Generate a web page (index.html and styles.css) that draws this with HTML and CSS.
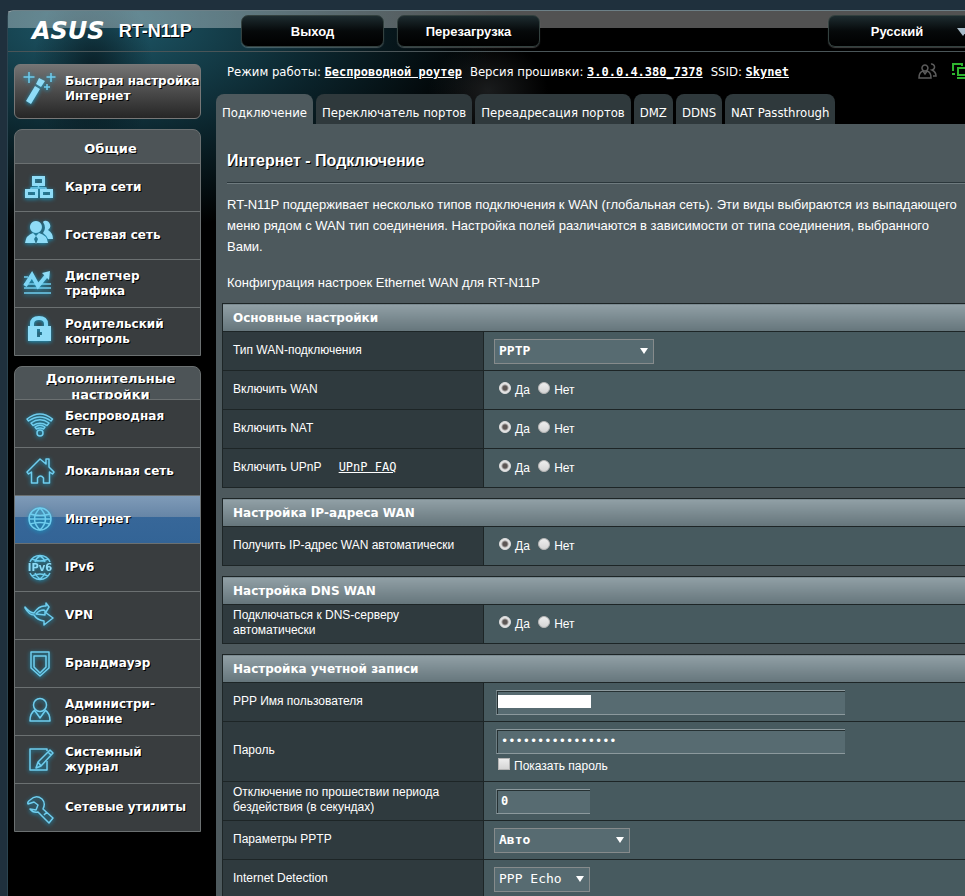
FILE: index.html
```html
<!DOCTYPE html>
<html lang="ru">
<head>
  <meta charset="UTF-8">
  <meta name="viewport" content="width=device-width, initial-scale=1.0">
  <title>ASUS RT-N11P - Подключение</title>
  <link rel="stylesheet" href="styles.css">
</head>
<body>

<div class="page">

  <header class="topbar">
    <div class="brand">
      <span class="logo">ASUS</span>
      <span class="model">RT-N11P</span>
    </div>
    <button type="button" class="top-btn">Выход</button>
    <button type="button" class="top-btn">Перезагрузка</button>
    <button type="button" class="top-btn lang-btn">Русский<span class="lang-arrow"></span></button>
  </header>

  <div class="layout">

    <!-- left menu -->
    <nav class="sidebar">
      <a href="#" class="quick">
        <svg class="icon" viewBox="0 0 36 36">
          <path class="solid" d="M6 30 15 15 20 18 11 33z M16 13 19 7 25 10 21 16z"/>
          <path class="line" d="M9 1v11M3.5 6h11M31 2v9M26.5 6h9M27 13v6M24 16h6"/>
        </svg>
        <span>Быстрая настройка Интернет</span>
      </a>

      <div class="menu">
        <h2 class="one-line">Общие</h2>
        <a href="#">
          <svg class="icon" viewBox="0 0 36 36">
            <path class="solid" fill-rule="evenodd" d="M12 6h13v10h-13zM15 9v4h7v-4zM5 19h13v9h-13zM8 22v3h7v-3zM20 19h13v9h-13zM23 22v3h7v-3z"/>
            <path class="line" d="M18.500 16v2M11 19v-1h15v1"/>
          </svg>
          <span>Карта сети</span>
        </a>
        <a href="#">
          <svg class="icon" viewBox="0 0 36 36">
            <path class="solid" d="M24 3a5 5 0 0 1 4 9q5 3 5 9h-5q-2-4-5-6 4-5 0-11z"/>
            <path class="solid" fill-rule="evenodd" d="M16 3a6 6 0 1 1-.1 0zM5 25q1-8 8-10l3 3 3-3q8 2 9 10zM16 18l-2 3 2 5 2-5z"/>
          </svg>
          <span>Гостевая сеть</span>
        </a>
        <a href="#">
          <svg class="icon" viewBox="0 0 36 36">
            <path class="line" d="M4 11h4M4 18h27M4 22h27M4 27h27"/>
            <path class="thick" d="M5 20 12 9 18 20 27 9"/>
            <path class="solid" d="M22 7 30 5 29 14z"/>
          </svg>
          <span>Диспетчер<br>трафика</span>
        </a>
        <a href="#">
          <svg class="icon" viewBox="0 0 36 36">
            <path class="thick" d="M12 13v-3q0-6 7-6t7 6v3"/>
            <path class="solid" fill-rule="evenodd" d="M8 12h23v15h-23zM17 15v8h3v-2h2v-3h-2v-3z"/>
          </svg>
          <span>Родительский<br>контроль</span>
        </a>
      </div>

      <div class="menu">
        <h2>Дополнительные настройки</h2>
        <a href="#">
          <svg class="icon" viewBox="0 0 36 36">
            <path class="line" d="M7 13l1.500 2Q20 7 31 15l1.500-2Q20 3 7 13zM11 17l2 2.500Q20 15 27 19.500l2-2.500Q20 10.500 11 17zM15 21l1.500 2Q20 21 23.500 23l1.500-2Q20 17.500 15 21z"/>
            <circle class="line" cx="20" cy="27" r="3"/>
          </svg>
          <span>Беспроводная<br>сеть</span>
        </a>
        <a href="#">
          <svg class="icon" viewBox="0 0 36 36">
            <path class="line" d="M7 18 20 5 26 10V5h3v8l5 5-1.500 2-3-2v11h-6v-5q-3-4-6 0v5h-6v-11l-3 2z"/>
          </svg>
          <span>Локальная сеть</span>
        </a>
        <a href="#" class="current">
          <svg class="icon" viewBox="0 0 36 36">
            <circle class="line" cx="20" cy="17" r="11"/>
            <path class="line" d="M20 6Q9 17 20 28M20 6Q31 17 20 28M10 12q10 3 20 0M10 22q10-3 20 0M9 17h22"/>
          </svg>
          <span>Интернет</span>
        </a>
        <a href="#">
          <svg class="icon" viewBox="0 0 36 36">
            <path class="line" d="M10 12a11 11 0 0 1 20 0M10 23a11 11 0 0 0 20 0M15 12q1-4 5-6 4 2 5 6M15 23q1 3 5 6 4-3 5-6M12 9q8 4 16 0M12 26q8-4 16 0"/>
            <text x="20" y="21" class="icon-text">IPv6</text>
          </svg>
          <span>IPv6</span>
        </a>
        <a href="#">
          <svg class="icon" viewBox="0 0 36 36">
            <path class="line" d="M5 9q5 6 9 6 5-8 12-7V5l3 4-3 5-2-2q-5 0-8 4l9 1v-3l8 6-9 7v-4q-7-1-10-6-5 0-9-7z"/>
          </svg>
          <span>VPN</span>
        </a>
        <a href="#">
          <svg class="icon" viewBox="0 0 36 36">
            <path class="line" d="M11 6h18v16l-9 8-9-8z"/>
            <path class="line" d="M14 10h12v11l-6 6-6-6z"/>
          </svg>
          <span>Брандмауэр</span>
        </a>
        <a href="#">
          <svg class="icon" viewBox="0 0 36 36">
            <circle class="line" cx="20" cy="11" r="6.500"/>
            <path class="line" d="M15 16q-5 3-5 11h20q0-8-5-11M15 17l5 7 5-7"/>
          </svg>
          <span>Администри-<br>рование</span>
        </a>
        <a href="#">
          <svg class="icon" viewBox="0 0 36 36">
            <path class="line" d="M27 9V7H10v21h17v-9"/>
            <path class="line" d="M30 8l3 3-12 13-5 2 2-6zM28 10l3 3M18 20l3 4"/>
          </svg>
          <span>Системный<br>журнал</span>
        </a>
        <a href="#">
          <svg class="icon" viewBox="0 0 36 36">
            <path class="line" d="M10 10q6-6 12-1 4 4 1 10l10 9-4 5-11-11q-5 1-8-3l6 1 2-5-4-3-6 2q-1-2 2-4zM24 25l3-3"/>
          </svg>
          <span>Сетевые утилиты</span>
        </a>
      </div>
    </nav>

    <main class="content">
      <div class="status">
        <span>Режим работы: <a href="#">Беспроводной роутер</a></span>
        <span>Версия прошивки: <a href="#">3.0.0.4.380_7378</a></span>
        <span>SSID: <a href="#">Skynet</a></span>
        <span class="status-icons">
          <svg width="20" height="18" viewBox="0 0 20 18" fill="none" stroke="#5c5c5c" stroke-width="1.5">
            <path d="M7 3a3 3 0 1 1-.1 0zM13 2a3 3 0 0 1 1 6q4 2 4 6h-3M1 16q0-6 4-7l2 3 2-3q4 1 4 7z"/>
          </svg>
          <svg width="24" height="18" viewBox="0 0 24 18" fill="none" stroke="#2fb52f" stroke-width="2">
            <path d="M3 9V2h9v2M2 12h3"/>
            <path d="M8 6h15v7H8zM7 16h16"/>
          </svg>
        </span>
      </div>

      <div class="tabs">
        <a href="#" class="active">Подключение</a>
        <a href="#">Переключатель портов</a>
        <a href="#">Переадресация портов</a>
        <a href="#">DMZ</a>
        <a href="#">DDNS</a>
        <a href="#">NAT Passthrough</a>
      </div>

      <form class="panel">
        <h1>Интернет - Подключение</h1>
        <p>RT-N11P поддерживает несколько типов подключения к WAN (глобальная сеть). Эти виды выбираются из выпадающего меню рядом с WAN тип соединения. Настройка полей различаются в зависимости от типа соединения, выбранного Вами.</p>
        <p>Конфигурация настроек Ethernet WAN для RT-N11P</p>

        <table>
          <colgroup><col class="col-name"><col></colgroup>
          <thead><tr><th colspan="2">Основные настройки</th></tr></thead>
          <tr>
            <th><label for="wanType">Тип WAN-подключения</label></th>
            <td><span class="select"><select id="wanType" class="w-type"><option>PPTP</option></select></span></td>
          </tr>
          <tr>
            <th>Включить WAN</th>
            <td class="radios">
              <label><input type="radio" name="wan" checked>Да</label>
              <label><input type="radio" name="wan">Нет</label>
            </td>
          </tr>
          <tr>
            <th>Включить NAT</th>
            <td class="radios">
              <label><input type="radio" name="nat" checked>Да</label>
              <label><input type="radio" name="nat">Нет</label>
            </td>
          </tr>
          <tr>
            <th>Включить UPnP <a href="#" class="faq">UPnP FAQ</a></th>
            <td class="radios">
              <label><input type="radio" name="upnp" checked>Да</label>
              <label><input type="radio" name="upnp">Нет</label>
            </td>
          </tr>
        </table>

        <table>
          <colgroup><col class="col-name"><col></colgroup>
          <thead><tr><th colspan="2">Настройка IP-адреса WAN</th></tr></thead>
          <tr>
            <th>Получить IP-адрес WAN автоматически</th>
            <td class="radios">
              <label><input type="radio" name="ip" checked>Да</label>
              <label><input type="radio" name="ip">Нет</label>
            </td>
          </tr>
        </table>

        <table>
          <colgroup><col class="col-name"><col></colgroup>
          <thead><tr><th colspan="2">Настройка DNS WAN</th></tr></thead>
          <tr>
            <th>Подключаться к DNS-серверу автоматически</th>
            <td class="radios">
              <label><input type="radio" name="dns" checked>Да</label>
              <label><input type="radio" name="dns">Нет</label>
            </td>
          </tr>
        </table>

        <table>
          <colgroup><col class="col-name"><col></colgroup>
          <thead><tr><th colspan="2">Настройка учетной записи</th></tr></thead>
          <tr>
            <th><label for="user">PPP Имя пользователя</label></th>
            <td><span class="field"><input type="text" id="user" class="text"><span class="mask"></span></span></td>
          </tr>
          <tr class="tall">
            <th><label for="pass">Пароль</label></th>
            <td>
              <input type="password" id="pass" class="text" value="1234567890123456">
              <label class="show"><input type="checkbox">Показать пароль</label>
            </td>
          </tr>
          <tr>
            <th><label for="idle">Отключение по прошествии периода бездействия (в секундах)</label></th>
            <td><input type="text" id="idle" class="text short" value="0"></td>
          </tr>
          <tr>
            <th><label for="opts">Параметры PPTP</label></th>
            <td><span class="select"><select id="opts" class="w-opts"><option>Авто</option></select></span></td>
          </tr>
          <tr>
            <th><label for="detect">Internet Detection</label></th>
            <td><span class="select"><select id="detect" class="w-detect"><option>PPP Echo</option></select></span></td>
          </tr>
        </table>
      </form>
    </main>

  </div>
</div>

</body>
</html>
```
FILE: styles.css
```css
* { box-sizing: border-box; }
body {
  margin: 0;
  padding: 10px 0 0 7px;
  height: 100vh;
  overflow: hidden;
  background: #1f303d;
  font-family: "Liberation Sans", Arial, sans-serif;
  font-size: 12px;
  color: #fff;
}
a { color: #fff; }
.page {
  border-top: 1px solid #6d8087;
  border-left: 1px solid #2c4450;
  border-radius: 6px 0 0 0;
  min-height: 100%;
  background:
    radial-gradient(ellipse 60px 90px at 85px 60px, rgba(6, 20, 26, .8), transparent),
    radial-gradient(ellipse 400px 210px at 90px 10px, #1f5b6c, rgba(14, 46, 56, .75) 60%, transparent),
    radial-gradient(ellipse 60px 50px at 480px 80px, #1a1c1d, transparent),
    #000;
}

/* top bar */
.topbar {
  display: flex;
  align-items: center;
  height: 41px;
  padding-left: 24px;
  border-bottom: 1px solid #4a5558;
  background: linear-gradient(rgba(255, 255, 255, .32) 17px, transparent 17px);
  overflow: hidden;
}
.brand {
  display: flex;
  align-items: center;
  width: 209px;
  gap: 14px;
}
.logo {
  font: italic bold 24px "DejaVu Sans", sans-serif;
}
.model {
  font-size: 18px;
  font-weight: bold;
  text-shadow: 1px 1px #000;
}
.top-btn {
  width: 143px;
  height: 32px;
  margin-right: 13px;
  border: 1px solid #33413f;
  border-radius: 7px;
  background: linear-gradient(#1d2c30, #06090a 50%, #000);
  box-shadow: 0 1px 1px rgba(255, 255, 255, .25);
  color: #fff;
  font: bold 13px "Liberation Sans", Arial, sans-serif;
  text-shadow: 1px 1px #000;
}
.lang-btn {
  position: relative;
  margin: 0 0 0 auto;
  width: 137px;
  border-right: 0;
  border-radius: 7px 0 0 7px;
  overflow: hidden;
}
.lang-arrow {
  position: absolute;
  top: 12px;
  right: -4px;
  border: 6px solid transparent;
  border-top: 8px solid #a9bcca;
  border-bottom: 0;
}

.layout {
  display: flex;
  align-items: flex-start;
}

/* left menu */
.sidebar {
  flex: none;
  width: 187px;
  margin: 12px 15px 0 6px;
  font: bold 12px/15px "DejaVu Sans", Verdana, sans-serif;
  text-shadow: 1px 1px #000;
}
.sidebar a {
  display: flex;
  align-items: center;
  height: 48px;
  padding-left: 5px;
  gap: 9px;
  border-top: 1px solid #6b7071;
  background: #393d3f;
  text-decoration: none;
}
.sidebar .quick {
  height: 55px;
  padding: 0 0 5px 5px;
  border: 1px solid #777;
  border-radius: 6px;
  background: linear-gradient(#747474, #4b4b4b 50%, #262626);
}
.menu {
  margin-top: 10px;
  border: 1px solid #6b7071;
  border-radius: 8px 8px 0 0;
  background: #4d5457;
}
.menu h2 {
  height: 32px;
  margin: 0;
  padding: 4px 22px 0 28px;
  overflow: hidden;
  font-size: 13px;
  line-height: 16px;
  text-align: center;
}
.menu .one-line {
  height: 33px;
  padding-top: 11px;
}
.sidebar .current {
  background: linear-gradient(#7f9bb8, #6685a6 45%, #376799 45%, #336496);
}
.icon {
  flex: none;
  width: 36px;
  height: 36px;
  filter: drop-shadow(0 1px 2px #1a9ac4);
}
.icon .solid { fill: #8fdcf7; }
.icon .line { fill: none; stroke: #6fcdee; stroke-width: 1.5; stroke-linejoin: round; }
.icon .thick { fill: none; stroke: #7fd6f5; stroke-width: 4; }
.icon-text { fill: #8fdcf7; font-size: 10px; text-anchor: middle; text-shadow: none; }

/* content */
.content { flex: 1; min-width: 0; }
.status {
  display: flex;
  align-items: center;
  gap: 8px;
  height: 42px;
  padding: 0 0 4px 11px;
  overflow: hidden;
  white-space: nowrap;
  font: 13px "DejaVu Sans Condensed", Tahoma, sans-serif;
}
.status a { font: bold 12px "DejaVu Sans Mono", monospace; }
.status-icons {
  display: flex;
  gap: 12px;
  margin: 0 -9px 0 auto;
}
.tabs {
  display: flex;
  gap: 3px;
}
.tabs a {
  height: 30px;
  padding: 8px 6px 0;
  border-radius: 8px 8px 0 0;
  background: #2f393c;
  font: 13px/22px "DejaVu Sans Condensed", Tahoma, sans-serif;
  white-space: nowrap;
  text-decoration: none;
}
.tabs .active { background: #4d595d; }
.panel {
  padding: 27px 0 0 6px;
  background: #4d595d;
}
h1 {
  margin: 0 0 11px 5px;
  padding-bottom: 11px;
  border-bottom: 1px solid #2b373b;
  box-shadow: 0 1px #6f7b7f;
  font-size: 16px;
  line-height: 20px;
  text-shadow: 1px 1px #000;
}
p {
  margin: 0 0 15px 5px;
  font-size: 13px;
  line-height: 21px;
}
p + p { margin-bottom: 10px; }
table {
  width: 100%;
  margin-bottom: 10px;
  border-collapse: collapse;
  table-layout: fixed;
}
.col-name { width: 261px; }
th, td {
  height: 39px;
  border: 1px solid #1d2526;
  text-align: left;
}
th {
  padding: 0 20px 2px 10px;
  background: #2f3a3e;
  font-weight: normal;
  line-height: 15px;
}
td {
  padding: 0 0 0 10px;
  background: #475a5f;
}
td, thead th { border-right: 0; }
thead tr:first-child th {
  height: 28px;
  padding-bottom: 0;
  background: linear-gradient(#91a0a6, #65757b);
  font: bold 12px "DejaVu Sans", sans-serif;
}
.tall td { height: 60px; }
.faq {
  margin-left: 14px;
  font: 12px "DejaVu Sans Mono", monospace;
}

.select { position: relative; display: block; width: fit-content; }
.select::after {
  content: "";
  position: absolute;
  top: 9px;
  right: 6px;
  border: 4px solid transparent;
  border-top: 6px solid #fff;
  border-bottom: 0;
  pointer-events: none;
}
select, .text {
  display: block;
  height: 25px;
  margin: 0;
  appearance: none;
  border: 1px solid #868b8c;
  border-radius: 0;
  background: #576b71;
  color: #fff;
  font: 13px "DejaVu Sans Mono", monospace;
}
select { padding: 0 4px 2px; }
.w-type { width: 160px; font-weight: bold; }
.w-opts { width: 136px; font-weight: bold; }
.w-detect { width: 96px; }
.text {
  width: 349px;
  margin-left: 2px;
  padding: 0 4px;
  border-color: #8c999d;
  border-right: 0;
  border-left-color: #6e7e83;
  box-shadow: inset 1px 1px #263133;
  font-size: 12px;
}
.short { width: 94px; font-weight: bold; }
.field { position: relative; display: block; }
.mask {
  position: absolute;
  top: 5px;
  left: 4px;
  width: 93px;
  height: 13px;
  background: #fff;
}
.radios label {
  display: inline-flex;
  margin: 0 5px;
  gap: 4px;
  line-height: 17px;
}
.radios label + label { margin-left: 0; }
input[type="radio"], input[type="checkbox"] {
  appearance: none;
  width: 12px;
  height: 12px;
  margin: 0;
  border: 1px solid #b5b5b5;
  background: linear-gradient(#eee, #d5d5d5);
}
input[type="radio"] { border-radius: 50%; }
input[type="radio"]:checked {
  border-color: #ddd;
  background: radial-gradient(circle, #5c5654 2px, #e4e4e4 4px);
}
.show {
  display: flex;
  margin: 4px 0 0 4px;
  gap: 4px;
  line-height: 17px;
}
```
